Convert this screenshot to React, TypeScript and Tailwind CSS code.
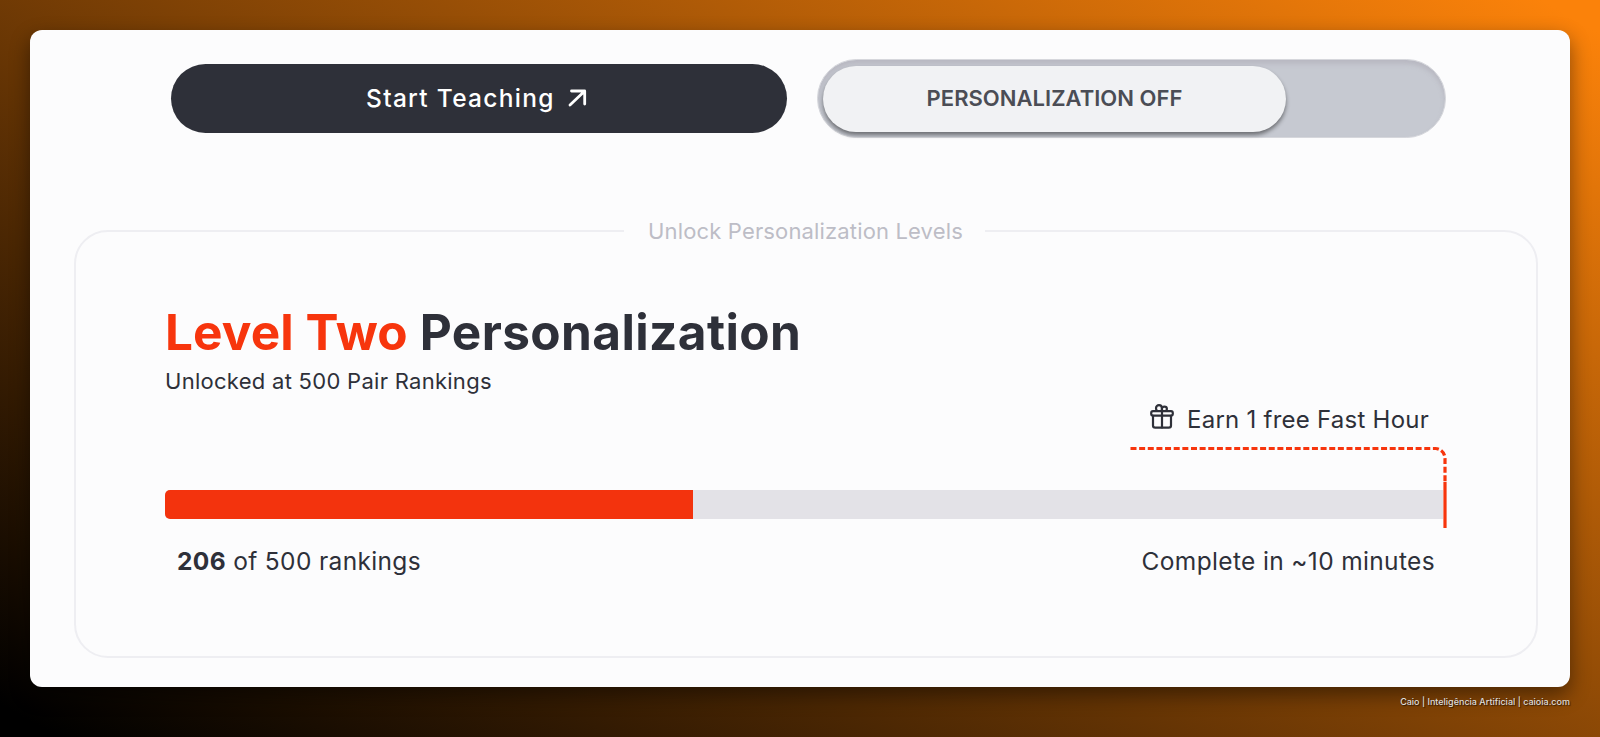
import React from "react";

interface ProgressBarProps {
    value: number;
    total: number;
}

const GiftIcon = () => (
    <svg width="24" height="25" viewBox="0 0 24 25" fill="none" stroke="#2e3039" strokeWidth="2.2" strokeLinecap="round" strokeLinejoin="round" className="relative -top-[3px] shrink-0">
        <rect x="1.2" y="7.2" width="21.6" height="4.4" rx="1.8" />
        <path d="M3 11.8V21.4a2.2 2.2 0 0 0 2.2 2.2h13.6A2.2 2.2 0 0 0 21 21.4V11.8" />
        <path d="M12 7v16.5" />
        <path d="M7.2 6.8A3 3 0 0 1 6 4.2C6 2.4 7.3 1.2 9 1.2c1.7 0 2.9 1.3 2.9 3V7" />
        <path d="M12 6.8V4.8c0-1.3.9-2.1 2.4-2.1s2.5.9 2.5 2.3c0 .9-.4 1.5-1 1.9" />
    </svg>
);

const ArrowIcon = () => (
    <svg width="19" height="18" viewBox="0 0 19 18" fill="none" stroke="white" strokeWidth="2.8" strokeLinecap="round" strokeLinejoin="round" className="relative -top-[1px]">
        <path d="M3.5 2h13.2v13M16.2 2.5L2 16" />
    </svg>
);

const ProgressBar: React.FC<ProgressBarProps> = ({ value, total }) => (
    <div className="mt-[49px] h-[29px] overflow-hidden rounded-l-[5px] bg-[#e3e2e7]">
        <div className="h-full bg-[#f3330d]" style={{ width: `${(value / total) * 100}%` }} />
    </div>
);

export default function App() {
    return (
        <div className="h-[737px] w-[1600px] overflow-hidden bg-[linear-gradient(29.5deg,#000000_2%,#fb820a_98%)] px-[30px] pt-[30px] font-['Inter',sans-serif] text-[#2e3039]">
            <main className="flex h-[657px] flex-col rounded-xl bg-[#fcfcfd] shadow-[0_8px_20px_rgba(0,0,0,0.45)]">
                <div className="flex items-center pt-[29px] pl-[141px]">
                    <button className="flex h-[69px] w-[616px] items-center rounded-full bg-[#2e3039] pl-[195px] text-[24.5px] font-medium tracking-[1.3px] text-white">
                        <span className="w-[202px] text-left whitespace-nowrap">Start Teaching</span>
                        <ArrowIcon />
                    </button>

                    <div className="ml-[30px] flex h-[79px] w-[629px] items-center rounded-full border border-[#d6d7dc] bg-[#c6c9d1] px-[5px] shadow-[inset_0_4px_4px_rgba(160,155,165,0.35)]">
                        <button className="h-[66px] w-[463px] rounded-full bg-[#f1f2f4] text-[22px] font-semibold tracking-[0.03px] whitespace-nowrap text-[#4b4d55] shadow-[0_3px_4px_rgba(0,0,0,0.45)]">
                            PERSONALIZATION OFF
                        </button>
                    </div>
                </div>

                <fieldset className="mr-[32px] ml-[44px] mt-[76px] h-[444px] rounded-[34px] border-2 border-[#eeeef2] pr-[93px] pl-[89px]">
                    <legend className="mx-auto h-[34px] w-[361px] pl-[3px] text-center text-[22px] leading-[34px] tracking-[0.15px] whitespace-nowrap text-[#bdbdc6]">
                        Unlock Personalization Levels
                    </legend>

                    <h1 className="mt-[52px] text-[49.5px] leading-[64px] font-bold tracking-[0.4px] whitespace-nowrap">
                        <span className="tracking-[0.1px] text-[#f7350d]">Level Two</span> Personalization
                    </h1>
                    <p className="mt-px text-[22px] leading-[32px] tracking-[0.28px] whitespace-nowrap">Unlocked at 500 Pair Rankings</p>

                    <div className="relative">
                        <div className="flex h-[44px] items-center justify-end gap-[13px] pt-px pr-[14px] text-[24px]">
                            <GiftIcon />
                            <span className="w-[242px] tracking-[0.25px] whitespace-nowrap">Earn 1 free Fast Hour</span>
                        </div>
                        <ProgressBar value={206.5} total={500} />
                        {/* reward marker at the end of the bar */}
                        <svg width="320" height="82" viewBox="0 0 320 82" fill="none" stroke="#f7350d" strokeWidth="3.2" className="absolute right-[-4px] bottom-[-9px]">
                            <path d="M3.5 2.5H308.500a10 10 0 0 1 9.500 10V37" strokeDasharray="6 2.64" />
                            <path d="M318 36V82" />
                        </svg>
                    </div>

                    <div className="mt-[23px] flex justify-between pr-[8px] pl-[12px] text-[24.5px] leading-[38px] tracking-[0.35px] whitespace-nowrap">
                        <p>
                            <b>206</b> of 500 rankings
                        </p>
                        <p>Complete in ~10 minutes</p>
                    </div>
                </fieldset>
            </main>

            <footer className="mt-[8px] text-right text-[9px] leading-[13px] font-medium text-[#dddddd] [text-shadow:1px_1px_1px_rgba(0,0,0,0.6)]">
                Caio | Inteligência Artificial | caioia.com
            </footer>
        </div>
    );
}
